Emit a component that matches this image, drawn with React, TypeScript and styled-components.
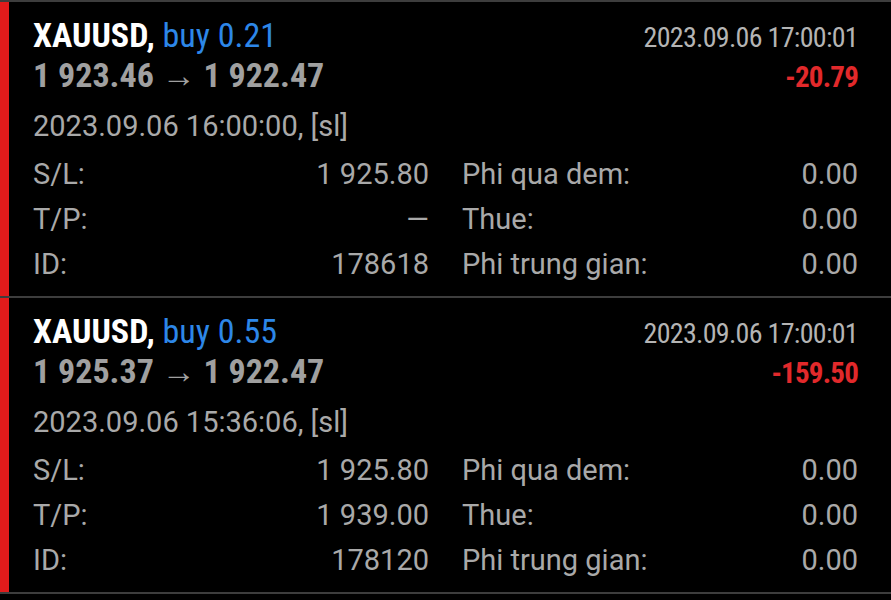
import React from 'react';
import styled, { createGlobalStyle } from 'styled-components';

const GlobalStyle = createGlobalStyle`
	html, body {
		margin: 0;
		padding: 0;
		background: #000;
	}
	body {
		font-family: Roboto, 'Noto Sans', sans-serif;
		color: #a9a9a9;
	}
`;

const List = styled.div`
	width: 891px;
	background: #000;
`;

const Card = styled.div`
	display: flex;
	border-top: 2px solid #3d3d3d;
	&:last-child {
		border-bottom: 2px solid #3d3d3d;
	}
`;

const SideBar = styled.div<{ $color: string }>`
	width: 9px;
	flex-shrink: 0;
	background: ${(p) => p.$color};
`;

const Body = styled.div`
	flex: 1;
	padding: 13px 33px 9px 24px;
`;

const HeadRow = styled.div`
	display: flex;
	justify-content: space-between;
	align-items: baseline;
	height: 40px;
	line-height: 40px;
`;

const Title = styled.span`
	font-family: 'Roboto Condensed', Roboto, sans-serif;
	font-size: 34px;
	font-weight: 700;
	color: #fff;
`;

const Side = styled.span`
	font-weight: 400;
	color: #2d87e8;
`;

const Price = styled.span`
	font-family: 'Roboto Condensed', Roboto, sans-serif;
	font-size: 34px;
	font-weight: 700;
	color: #a0a0a0;
`;

const CloseTime = styled.span`
	font-family: 'Roboto Condensed', Roboto, sans-serif;
	font-size: 28px;
	letter-spacing: -0.7px;
	color: #b4b4b4;
`;

const Profit = styled.span<{ $negative: boolean }>`
	font-family: 'Roboto Condensed', Roboto, sans-serif;
	font-size: 29px;
	font-weight: 700;
	letter-spacing: -0.8px;
	color: ${(p) => (p.$negative ? '#e2292b' : '#2d87e8')};
`;

const OpenLine = styled.div`
	margin-top: 11px;
	font-size: 29px;
	line-height: 40px;
	color: #a9a9a9;
`;

const Details = styled.div`
	display: grid;
	grid-template-columns: 1fr 1fr;
	column-gap: 33px;
	margin-top: 6px;
`;

const Field = styled.div`
	display: flex;
	justify-content: space-between;
	font-size: 29px;
	line-height: 45px;
	color: #a9a9a9;
`;

type Trade = {
	symbol: string;
	side: string;
	open: string;
	close: string;
	closeTime: string;
	profit: string;
	openTime: string;
	sl: string;
	tp: string;
	id: string;
};

const trades: Trade[] = [
	{
		symbol: 'XAUUSD',
		side: 'buy 0.21',
		open: '1 923.46',
		close: '1 922.47',
		closeTime: '2023.09.06 17:00:01',
		profit: '-20.79',
		openTime: '2023.09.06 16:00:00, [sl]',
		sl: '1 925.80',
		tp: '—',
		id: '178618',
	},
	{
		symbol: 'XAUUSD',
		side: 'buy 0.55',
		open: '1 925.37',
		close: '1 922.47',
		closeTime: '2023.09.06 17:00:01',
		profit: '-159.50',
		openTime: '2023.09.06 15:36:06, [sl]',
		sl: '1 925.80',
		tp: '1 939.00',
		id: '178120',
	},
];

const TradeCard = ({ trade }: { trade: Trade }) => {
	const rows: [string, string][] = [
		['S/L:', trade.sl],
		['Phi qua dem:', '0.00'],
		['T/P:', trade.tp],
		['Thue:', '0.00'],
		['ID:', trade.id],
		['Phi trung gian:', '0.00'],
	];
	return (
		<Card>
			<SideBar $color="#e21b1b" />
			<Body>
				<HeadRow>
					<Title>
						{trade.symbol}, <Side>{trade.side}</Side>
					</Title>
					<CloseTime>{trade.closeTime}</CloseTime>
				</HeadRow>
				<HeadRow>
					<Price>
						{trade.open} → {trade.close}
					</Price>
					<Profit $negative={trade.profit.startsWith('-')}>{trade.profit}</Profit>
				</HeadRow>
				<OpenLine>{trade.openTime}</OpenLine>
				<Details>
					{rows.map(([label, value]) => (
						<Field key={label}>
							<span>{label}</span>
							<span>{value}</span>
						</Field>
					))}
				</Details>
			</Body>
		</Card>
	);
};

const App = () => {
	return (
		<>
			<GlobalStyle />
			<List>
				{trades.map((t) => (
					<TradeCard key={t.id} trade={t} />
				))}
			</List>
		</>
	);
};

export default App;
